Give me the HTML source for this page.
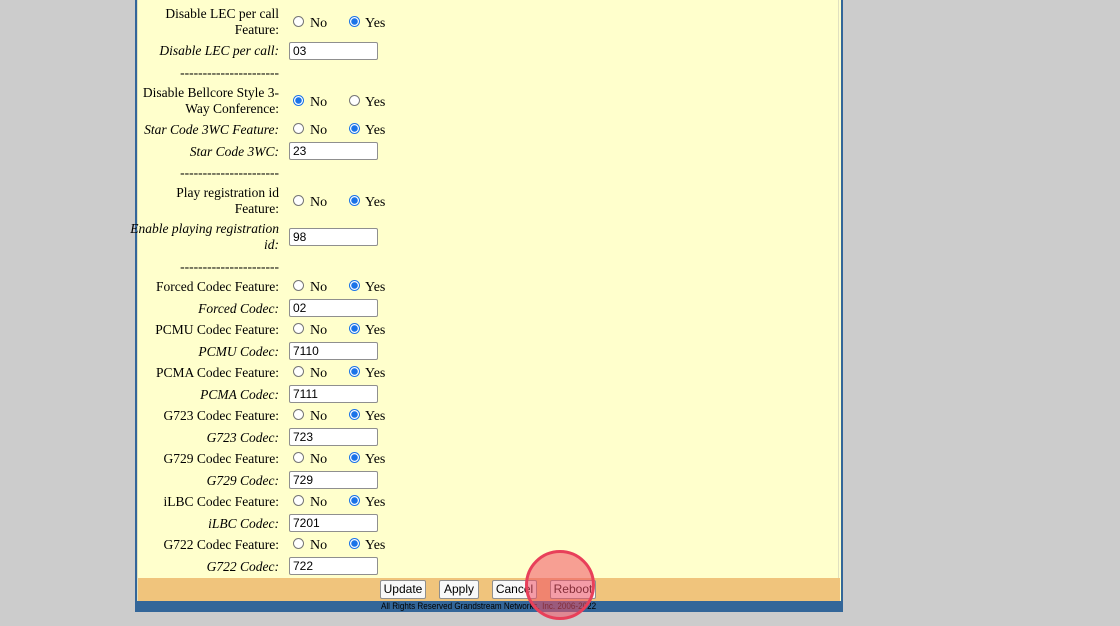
<!DOCTYPE html>
<html><head><meta charset="utf-8"><style>
body{margin:0;width:1120px;height:626px;background:#cccccc;position:relative;overflow:hidden;font-family:"Liberation Serif",serif;font-size:13.5px;color:#000}
#panel{position:absolute;left:135px;top:-2px;width:704px;height:603px;background:#ffffcc;border:2px solid #336699;border-top:none;border-bottom:none}
#inner{position:absolute;left:137px;top:0;width:702px;height:601px;border-left:1px solid #e0e0c0;border-right:1px solid #e0e0c0;box-sizing:border-box}
.l{position:absolute;right:841px;text-align:right;line-height:16px;white-space:nowrap;margin-top:1px}
.i{font-style:italic}
.inp{position:absolute;left:289px;width:89px;height:18px;box-sizing:border-box;border:1px solid #8f8f8f;border-radius:2px;background:#fff;font-family:"Liberation Sans",sans-serif;font-size:12px;line-height:16px;padding-left:3px}
.r{position:absolute;width:11px;height:11px;border-radius:50%;box-sizing:border-box;border:1px solid #767676;background:#fff}
.r.on{border:1px solid #1a73e8;background:radial-gradient(circle,#1a73e8 3px,#fff 3.5px)}
.t{position:absolute;line-height:16px;margin-top:2px;font-size:14px}
#bar{position:absolute;left:138px;top:578px;width:702px;height:23px;background:#f0c47c}
.b{position:absolute;top:580px;height:19px;box-sizing:border-box;border:1px solid #8f8f8f;border-radius:2px;background:#f8f8f8;font-family:"Liberation Sans",sans-serif;font-size:12px;line-height:17px;text-align:center}
#foot{position:absolute;left:135px;top:601px;width:708px;height:11px;background:#336699;font-family:"Liberation Sans",sans-serif;font-size:9px;line-height:11px;text-align:center;color:#000}
#circ{position:absolute;left:525px;top:550px;width:70px;height:70px;border-radius:50%;box-sizing:border-box;border:3px solid #e8405a;background:rgba(240,80,100,0.55)}
</style></head><body>
<div id="panel"></div><div id="inner"></div>

<div class="l" style="top:5px">Disable LEC per call<br>Feature:</div>
<div class="l i" style="top:42px">Disable LEC per call:</div>
<div class="inp" style="top:42px">03</div>
<div class="l" style="top:64px">----------------------</div>
<div class="l" style="top:84px">Disable Bellcore Style 3-<br>Way Conference:</div>
<div class="l i" style="top:121px">Star Code 3WC Feature:</div>
<div class="l i" style="top:143px">Star Code 3WC:</div>
<div class="inp" style="top:142px">23</div>
<div class="l" style="top:164px">----------------------</div>
<div class="l" style="top:184px">Play registration id<br>Feature:</div>
<div class="l i" style="top:220px">Enable playing registration<br>id:</div>
<div class="inp" style="top:228px">98</div>
<div class="l" style="top:258px">----------------------</div>
<div class="l" style="top:278px">Forced Codec Feature:</div>
<div class="l i" style="top:300px">Forced Codec:</div><div class="inp" style="top:299px">02</div>
<div class="l" style="top:321px">PCMU Codec Feature:</div>
<div class="l i" style="top:343px">PCMU Codec:</div><div class="inp" style="top:342px">7110</div>
<div class="l" style="top:364px">PCMA Codec Feature:</div>
<div class="l i" style="top:386px">PCMA Codec:</div><div class="inp" style="top:385px">7111</div>
<div class="l" style="top:407px">G723 Codec Feature:</div>
<div class="l i" style="top:429px">G723 Codec:</div><div class="inp" style="top:428px">723</div>
<div class="l" style="top:450px">G729 Codec Feature:</div>
<div class="l i" style="top:472px">G729 Codec:</div><div class="inp" style="top:471px">729</div>
<div class="l" style="top:493px">iLBC Codec Feature:</div>
<div class="l i" style="top:515px">iLBC Codec:</div><div class="inp" style="top:514px">7201</div>
<div class="l" style="top:536px">G722 Codec Feature:</div>
<div class="l i" style="top:558px">G722 Codec:</div><div class="inp" style="top:557px">722</div>

<div class="r" style="left:293px;top:16px"></div><div class="t" style="left:310px;top:14px">No</div>
<div class="r on" style="left:349px;top:16px"></div><div class="t" style="left:365px;top:14px">Yes</div>

<div class="r on" style="left:293px;top:95px"></div><div class="t" style="left:310px;top:93px">No</div>
<div class="r" style="left:349px;top:95px"></div><div class="t" style="left:365px;top:93px">Yes</div>

<div class="r" style="left:293px;top:123px"></div><div class="t" style="left:310px;top:121px">No</div>
<div class="r on" style="left:349px;top:123px"></div><div class="t" style="left:365px;top:121px">Yes</div>

<div class="r" style="left:293px;top:195px"></div><div class="t" style="left:310px;top:193px">No</div>
<div class="r on" style="left:349px;top:195px"></div><div class="t" style="left:365px;top:193px">Yes</div>

<div class="r" style="left:293px;top:280px"></div><div class="t" style="left:310px;top:278px">No</div>
<div class="r on" style="left:349px;top:280px"></div><div class="t" style="left:365px;top:278px">Yes</div>

<div class="r" style="left:293px;top:323px"></div><div class="t" style="left:310px;top:321px">No</div>
<div class="r on" style="left:349px;top:323px"></div><div class="t" style="left:365px;top:321px">Yes</div>

<div class="r" style="left:293px;top:366px"></div><div class="t" style="left:310px;top:364px">No</div>
<div class="r on" style="left:349px;top:366px"></div><div class="t" style="left:365px;top:364px">Yes</div>

<div class="r" style="left:293px;top:409px"></div><div class="t" style="left:310px;top:407px">No</div>
<div class="r on" style="left:349px;top:409px"></div><div class="t" style="left:365px;top:407px">Yes</div>

<div class="r" style="left:293px;top:452px"></div><div class="t" style="left:310px;top:450px">No</div>
<div class="r on" style="left:349px;top:452px"></div><div class="t" style="left:365px;top:450px">Yes</div>

<div class="r" style="left:293px;top:495px"></div><div class="t" style="left:310px;top:493px">No</div>
<div class="r on" style="left:349px;top:495px"></div><div class="t" style="left:365px;top:493px">Yes</div>

<div class="r" style="left:293px;top:538px"></div><div class="t" style="left:310px;top:536px">No</div>
<div class="r on" style="left:349px;top:538px"></div><div class="t" style="left:365px;top:536px">Yes</div>

<div id="bar"></div>
<div class="b" style="left:380px;width:46px">Update</div>
<div class="b" style="left:439px;width:40px">Apply</div>
<div class="b" style="left:492px;width:45px">Cancel</div>
<div class="b" style="left:550px;width:46px">Reboot</div>
<div id="foot"><span style="display:inline-block;transform:scaleX(0.9)">All Rights Reserved Grandstream Networks, Inc. 2006-2022</span></div>
<div id="circ"></div>
</body></html>
